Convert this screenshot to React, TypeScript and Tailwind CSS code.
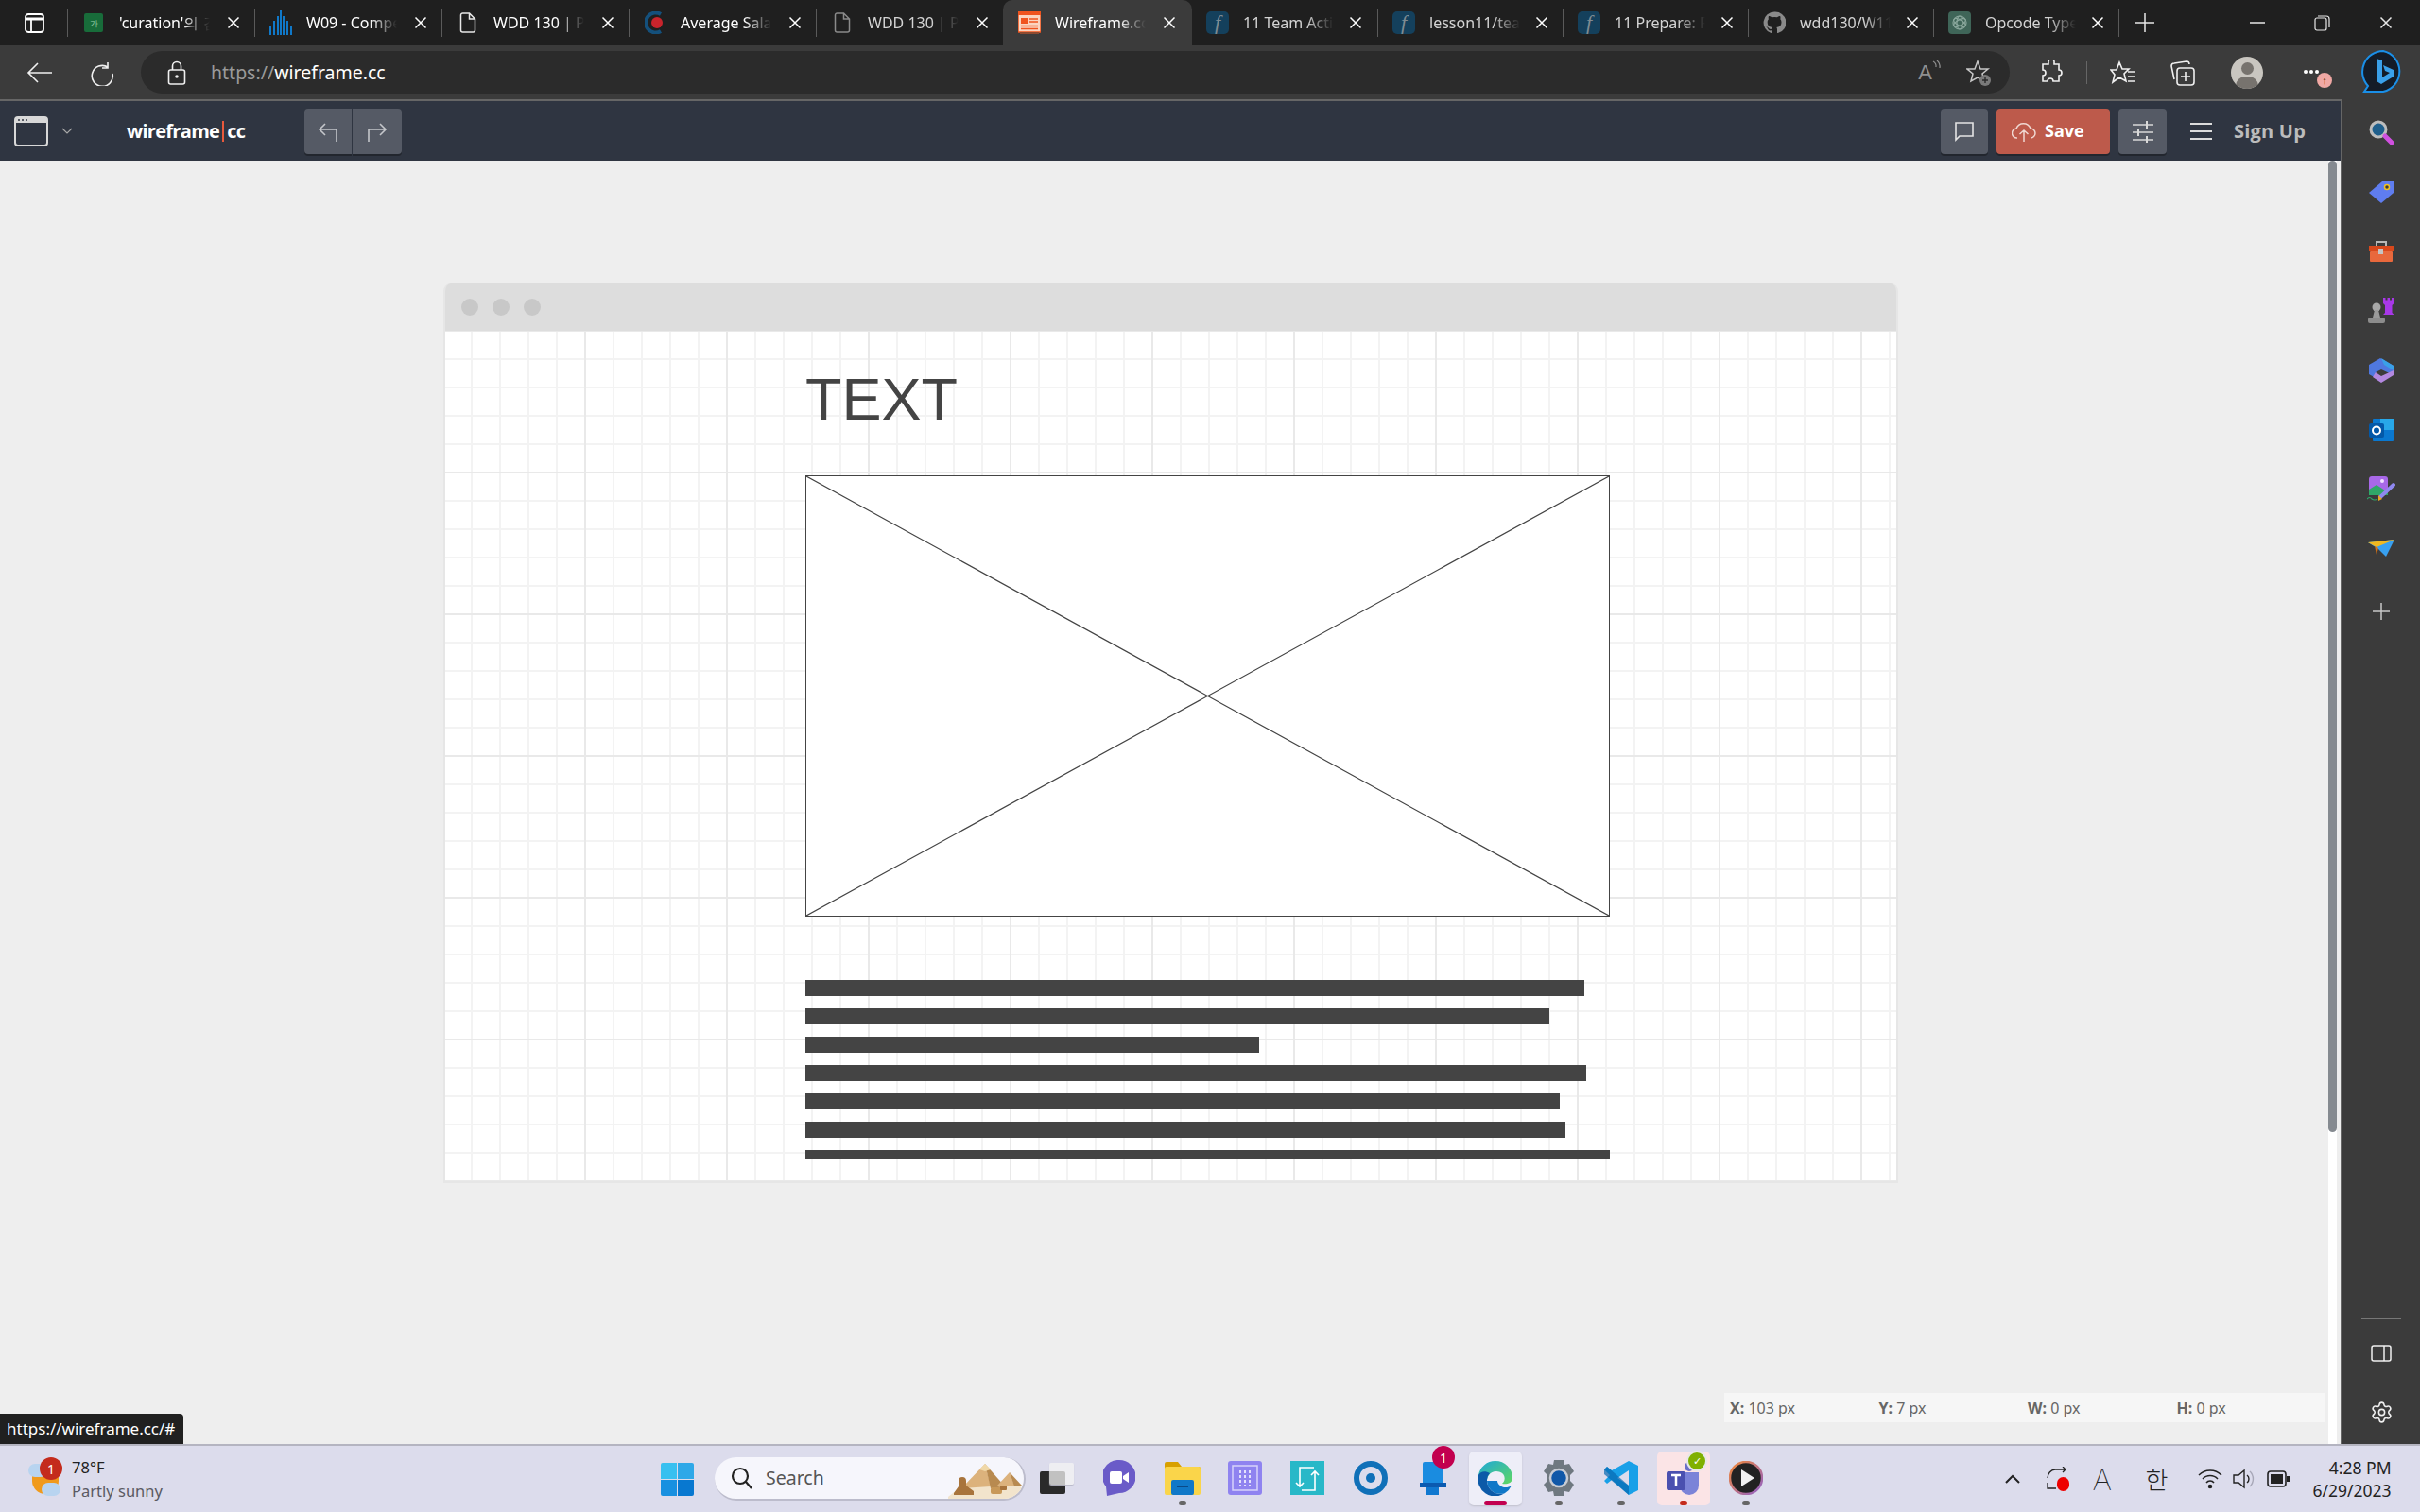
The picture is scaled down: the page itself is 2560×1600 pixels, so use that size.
import type { ReactNode } from "react";
import { Settings } from "lucide-react";

function CloseIcon({ className = "" }: { className?: string }) {
  return (
    <svg width="14" height="14" viewBox="0 0 14 14" className={className}>
      <path d="M1.5 1.5 L12.5 12.5 M12.5 1.5 L1.5 12.5" stroke="currentColor" strokeWidth="1.5" />
    </svg>
  );
}

const DocIcon = ({ dim }: { dim?: boolean }) => (
  <svg width="20" height="24" viewBox="0 0 20 24" fill="none" stroke={dim ? "#8a8a8a" : "#e8e8e8"} strokeWidth="1.5">
    <path d="M2.5 4 a2 2 0 0 1 2-2 h7 l6 6 v12 a2 2 0 0 1-2 2 h-11 a2 2 0 0 1-2-2 z M11.5 2 v6 h6" />
  </svg>
);

const FIcon = () => (
  <div className="flex h-6 w-6 items-center justify-center rounded-[5px] bg-[#14405c] font-['Liberation_Serif',serif] text-[22px] italic leading-none text-[#7f8b92]">
    f
  </div>
);

const SheetIcon = () => (
  <div className="flex h-[20px] w-[20px] items-center justify-center rounded-[2px] bg-[#186c3a] text-[9px] leading-none text-[#9fd0ad]">
    가
  </div>
);

const BarsIcon = () => (
  <svg width="24" height="26" viewBox="0 0 24 26" fill="#1078c8">
    <rect x="0" y="16" width="2" height="10" />
    <rect x="4" y="11" width="2" height="15" />
    <rect x="8" y="6" width="2" height="20" />
    <rect x="11" y="0" width="2" height="26" />
    <rect x="14" y="6" width="2" height="20" />
    <rect x="18" y="11" width="2" height="15" />
    <rect x="22" y="16" width="2" height="10" />
  </svg>
);

const TargetFavicon = () => (
  <svg width="22" height="24" viewBox="0 0 22 24">
    <path d="M17 3 A10.5 10.5 0 1 0 17 21" fill="none" stroke="#14507c" strokeWidth="4" />
    <circle cx="13" cy="12" r="6" fill="#c8242c" />
  </svg>
);

const WireframeFavicon = () => (
  <svg width="24" height="24" viewBox="0 0 24 24">
    <rect x="0" y="0" width="24" height="22" fill="#fbd5c0" stroke="#f0541e" strokeWidth="1.5" />
    <rect x="0" y="0" width="24" height="4" fill="#f0541e" />
    <rect x="3" y="7" width="7" height="6" fill="#f0541e" />
    <path d="M12 8 h9 M12 11 h9 M3 15.5 h18 M3 18.5 h18" stroke="#f0541e" strokeWidth="1.5" />
    <rect x="2" y="22" width="20" height="2" fill="#8c4a30" />
  </svg>
);

const GithubFavicon = () => (
  <svg width="24" height="24" viewBox="0 0 24 24" fill="#8a8a8a">
    <path d="M12 .5a11.5 11.5 0 0 0-3.6 22.4c.6.1.8-.3.8-.6v-2c-3.2.7-3.9-1.5-3.9-1.5-.5-1.3-1.3-1.7-1.3-1.7-1-.7.1-.7.1-.7 1.2.1 1.8 1.2 1.8 1.2 1 1.8 2.7 1.3 3.4 1 .1-.8.4-1.3.7-1.6-2.6-.3-5.3-1.3-5.3-5.7 0-1.3.5-2.3 1.2-3.1-.1-.3-.5-1.5.1-3.1 0 0 1-.3 3.2 1.2a11 11 0 0 1 5.8 0c2.2-1.5 3.2-1.2 3.2-1.2.6 1.6.2 2.8.1 3.1.8.8 1.2 1.8 1.2 3.1 0 4.4-2.7 5.4-5.3 5.7.4.4.8 1.1.8 2.2v3.3c0 .3.2.7.8.6A11.5 11.5 0 0 0 12 .5z" />
  </svg>
);

const GptFavicon = () => (
  <div className="flex h-6 w-6 items-center justify-center rounded-[4px] bg-[#3f6558]">
    <svg width="18" height="18" viewBox="0 0 18 18" fill="none" stroke="#8aa79c" strokeWidth="1.2">
      <circle cx="9" cy="9" r="7" />
      <ellipse cx="9" cy="9" rx="3" ry="7" />
      <ellipse cx="9" cy="9" rx="3" ry="7" transform="rotate(60 9 9)" />
      <ellipse cx="9" cy="9" rx="3" ry="7" transform="rotate(120 9 9)" />
    </svg>
  </div>
);

type TabInfo = { title: string; icon: ReactNode; active?: boolean; narrow?: boolean; noLine?: boolean; dim?: boolean };

const tabs: TabInfo[] = [
  { title: "'curation'의 검색결과", icon: <SheetIcon /> },
  { title: "W09 - Compensation", icon: <BarsIcon /> },
  { title: "WDD 130 | Projects", icon: <DocIcon /> },
  { title: "Average Salary", icon: <TargetFavicon /> },
  { title: "WDD 130 | Projects", icon: <DocIcon dim />, dim: true },
  { title: "Wireframe.cc", icon: <WireframeFavicon />, active: true },
  { title: "11 Team Activity", icon: <FIcon />, narrow: true, noLine: true, dim: true },
  { title: "lesson11/team", icon: <FIcon />, narrow: true, dim: true },
  { title: "11 Prepare: Rec", icon: <FIcon />, narrow: true, dim: true },
  { title: "wdd130/W11", icon: <GithubFavicon />, narrow: true, dim: true },
  { title: "Opcode Types", icon: <GptFavicon />, narrow: true, dim: true },
];

function Tab({ tab }: { tab: TabInfo }) {
  return (
    <div
      className={`relative flex h-[48px] shrink-0 items-center ${
        tab.active ? "w-[200px] rounded-t-[10px] bg-[#3b3b3b]" : tab.narrow ? "w-[196px]" : "w-[198px]"
      }`}
    >
      {!tab.active && !tab.noLine && <div className="h-[30px] w-[1px] shrink-0 bg-[#5a5a5a]" />}
      <div className={`flex w-[24px] shrink-0 items-center justify-center ${tab.active ? "ml-[16px]" : "ml-[15px]"}`}>
        {tab.icon}
      </div>
      <div
        className={`ml-[15px] w-[96px] shrink-0 overflow-hidden whitespace-nowrap text-[16px] [mask-image:linear-gradient(to_right,black_70%,transparent)] ${
          tab.dim ? "text-[#d4d4d4]" : "text-white"
        }`}
      >
        {tab.title}
      </div>
      <CloseIcon className={`shrink-0 text-white ${tab.narrow ? "ml-[16px]" : "ml-[18px]"}`} />
    </div>
  );
}

function TabStrip() {
  return (
    <div className="flex h-[48px] shrink-0 items-center bg-[#1f1f1f]">
      <div className="flex w-[71px] shrink-0 justify-start pl-[26px]">
        <svg width="21" height="21" viewBox="0 0 21 21" fill="none" stroke="white" strokeWidth="1.8">
          <rect x="1" y="1" width="19" height="19" rx="3" />
          <path d="M1 6 h19" strokeWidth="3" />
          <path d="M7 6 v14" />
        </svg>
      </div>
      {tabs.map((t, i) => (
        <Tab key={i} tab={t} />
      ))}
      <div className="h-[30px] w-[1px] shrink-0 bg-[#5a5a5a]" />
      <svg width="22" height="22" viewBox="0 0 22 22" className="ml-[16px]" stroke="#e8e8e8" strokeWidth="1.5">
        <path d="M11 1 v20 M1 11 h20" />
      </svg>
      <svg width="16" height="2" viewBox="0 0 16 2" className="ml-[100px]" stroke="#e8e8e8" strokeWidth="1.5">
        <path d="M0 1 h16" />
      </svg>
      <svg width="17" height="17" viewBox="0 0 17 17" className="ml-[52px]" fill="none" stroke="#e8e8e8" strokeWidth="1.2">
        <rect x="1" y="3" width="12" height="13" rx="2" />
        <path d="M4 1 h9 a3 3 0 0 1 3 3 v9" />
      </svg>
      <CloseIcon className="ml-[52px] text-[#e8e8e8]" />
    </div>
  );
}

function BrowserToolbar() {
  return (
    <div className="flex h-[57px] shrink-0 items-center bg-[#3b3b3b]">
      <svg width="28" height="24" viewBox="0 0 28 24" className="ml-[28px]" fill="none" stroke="#f0f0f0" strokeWidth="1.6">
        <path d="M27 12 H2 M12 2 L2 12 L12 22" />
      </svg>
      <svg width="28" height="28" viewBox="0 0 28 28" className="ml-[38px]" fill="none" stroke="#f0f0f0" strokeWidth="1.6">
        <path d="M20 3 v6 h-6 M20 8 A11 11 0 1 0 25 15" />
      </svg>
      <div className="ml-[27px] flex h-[45px] w-[1977px] items-center rounded-full bg-[#2b2b2b]">
        <svg width="20" height="26" viewBox="0 0 20 26" className="ml-[28px]" fill="none" stroke="#f0f0f0" strokeWidth="1.6">
          <rect x="1.5" y="10" width="17" height="15" rx="2" />
          <path d="M5.5 10 V6 a4.5 4.5 0 0 1 9 0 V10" />
          <circle cx="10" cy="17" r="1" fill="#f0f0f0" />
        </svg>
        <div className="ml-[26px] text-[19.5px] text-white">
          <span className="text-[#9a9a9a]">https://</span>wireframe.cc
        </div>
        <div className="flex-1" />
        <div className="font-['Liberation_Sans',sans-serif] text-[22px] font-light leading-none text-[#8f8f8f]">A</div>
        <svg width="10" height="16" viewBox="0 0 10 16" className="mb-[12px]" fill="none" stroke="#8f8f8f" strokeWidth="1.2">
          <path d="M1 2 a6 6 0 0 1 3 6 M5 1 a9 9 0 0 1 3 8" />
        </svg>
        <svg width="28" height="30" viewBox="0 0 28 30" className="ml-[26px] mr-[18px]" fill="none" stroke="#c8c8c8" strokeWidth="1.5">
          <path d="M12 3 L15 11 H23 L17 16 L19 24 L12 20 L5 24 L7 16 L1 11 H9 Z" />
          <circle cx="20" cy="23" r="6" fill="#7a7a7a" stroke="none" />
          <path d="M17 23 h6 M20 20 v6" stroke="#2b2b2b" strokeWidth="1.4" />
        </svg>
      </div>
      <svg width="24" height="28" viewBox="0 0 24 28" className="ml-[32px]" fill="none" stroke="#f0f0f0" strokeWidth="1.6">
        <path d="M9 2 a3 3 0 0 1 6 1 l0 2 h5 v6 a3 3 0 1 1 0 6 v6 h-6 a3 3 0 1 0-6 0 H3 v-6 a3 3 0 1 0 0-6 V5 h6 z" />
      </svg>
      <div className="ml-[25px] h-[24px] w-[1px] bg-[#666666]" />
      <svg width="28" height="26" viewBox="0 0 28 26" className="ml-[24px]" fill="none" stroke="#f0f0f0" strokeWidth="1.6">
        <path d="M10 2 L13 9 H20 L15 14 L17 22 L10 18 L3 23 L5 15 L1 10 H7 Z M19 12 h7 M19 17 h7 M19 22 h7" />
      </svg>
      <svg width="28" height="30" viewBox="0 0 28 30" className="ml-[35px]" fill="none" stroke="#f0f0f0" strokeWidth="1.6">
        <rect x="8" y="10" width="18" height="18" rx="3" />
        <path d="M17 14 v10 M12 19 h10 M5 22 L2 8 a3 3 0 0 1 3-3 L18 3 a3 3 0 0 1 3 3" />
      </svg>
      <div className="relative ml-[37px] h-[34px] w-[34px] overflow-hidden rounded-full bg-[#c9c6c0]">
        <div className="absolute left-[11px] top-[6px] h-[13px] w-[13px] rounded-full bg-[#77736e]" />
        <div className="absolute left-[5px] top-[21px] h-[20px] w-[24px] rounded-full bg-[#77736e]" />
      </div>
      <div className="relative ml-[43px] h-[34px] w-[34px]">
        <div className="absolute left-0 top-[14px] flex gap-[2px]">
          <div className="h-[4px] w-[4px] rounded-full bg-white" />
          <div className="h-[4px] w-[4px] rounded-full bg-white" />
          <div className="h-[4px] w-[4px] rounded-full bg-white" />
        </div>
        <div className="absolute left-[14px] top-[17px] flex h-[16px] w-[16px] items-center justify-center rounded-full bg-[#f0a8a4] text-[11px] font-bold leading-none text-[#222222]">
          ↑
        </div>
      </div>
      <svg width="46" height="48" viewBox="0 0 46 48" className="ml-[27px]">
        <path d="M23 1 a22 22 0 0 1 0 43 H3 l4-6 A22 22 0 0 1 23 1 z" fill="#141c28" stroke="#1a8fe8" strokeWidth="2" />
        <path d="M16 9 l6 2 v18 l8-5 -5-2 -2-6 11 5 v7 l-13 8 -5-3 z" fill="#3aa0ea" />
      </svg>
    </div>
  );
}

function NavButton({ children, className = "" }: { children: ReactNode; className?: string }) {
  return (
    <div className={`flex h-[48px] w-[50px] items-center justify-center rounded-[4px] bg-[#555a65] shadow-[0_2px_0_#22262e] ${className}`}>
      {children}
    </div>
  );
}

function WireframeNav() {
  return (
    <div className="flex h-[65px] shrink-0 items-center border-t-2 border-[#666666] bg-[#2f3541] pr-[37px]">
      <svg width="36" height="32" viewBox="0 0 36 32" className="ml-[15px]" fill="none">
        <rect x="1" y="1" width="34" height="30" rx="3" stroke="#d8d8d8" strokeWidth="2" />
        <path d="M1 4 a3 3 0 0 1 3-3 h28 a3 3 0 0 1 3 3 v3 H1 z" fill="#d8d8d8" />
        <circle cx="5" cy="4" r="1" fill="#2f3541" />
        <circle cx="9" cy="4" r="1" fill="#2f3541" />
        <circle cx="13" cy="4" r="1" fill="#2f3541" />
      </svg>
      <svg width="12" height="7" viewBox="0 0 12 7" className="ml-[14px]" fill="none" stroke="#a8a8a8" strokeWidth="1.2">
        <path d="M1 1 L6 6 L11 1" />
      </svg>
      <div className="ml-[57px] flex w-[127px] items-center whitespace-nowrap font-['Open_Sans',sans-serif] text-[20px] font-bold tracking-[-0.7px] text-white">
        wireframe
        <div className="mx-[3px] h-[22px] w-[2px] bg-[#e8593c]" />
        cc
      </div>
      <div className="ml-[61px] flex gap-[1px]">
        <NavButton className="rounded-r-none">
          <svg width="24" height="24" viewBox="0 0 24 24" fill="none" stroke="#c4c6ca" strokeWidth="1.6">
            <path d="M9 4 L3 10 L9 16 M3 10 H21 V23" />
          </svg>
        </NavButton>
        <NavButton className="w-[52px] rounded-l-none">
          <svg width="24" height="24" viewBox="0 0 24 24" fill="none" stroke="#c4c6ca" strokeWidth="1.6">
            <path d="M15 4 L21 10 L15 16 M21 10 H3 V23" />
          </svg>
        </NavButton>
      </div>
      <div className="flex-1" />
      <NavButton>
        <svg width="22" height="22" viewBox="0 0 22 22" fill="none" stroke="#e4e4e4" strokeWidth="1.6">
          <path d="M2 2 H20 V16 H6 L2 20 Z" />
        </svg>
      </NavButton>
      <div className="ml-[9px] flex h-[48px] w-[120px] items-center rounded-[4px] bg-[#bd5a4b] shadow-[0_2px_0_#22262e]">
        <svg width="26" height="24" viewBox="0 0 26 24" className="ml-[16px]" fill="none" stroke="#f0d8d2" strokeWidth="1.5">
          <path d="M6 19 a5 5 0 0 1-1-10 a8 8 0 0 1 15 0 a5 5 0 0 1 0 10 M13 23 V11 M8.5 15 L13 11 L17.5 15" />
        </svg>
        <span className="ml-[9px] font-['Open_Sans',sans-serif] text-[18px] font-bold text-white">Save</span>
      </div>
      <NavButton className="ml-[9px] w-[51px]">
        <svg width="22" height="24" viewBox="0 0 22 24" fill="none" stroke="#d8d8d8" strokeWidth="1.6">
          <path d="M0 5 H22 M0 13 H22 M0 21 H22" />
          <path d="M15 1 V9 M6 9 V17 M15 17 V24" strokeWidth="2" />
        </svg>
      </NavButton>
      <svg width="23" height="20" viewBox="0 0 23 20" className="ml-[25px]" stroke="#dcdcdc" strokeWidth="2">
        <path d="M0 2 H23 M0 10 H23 M0 18 H23" />
      </svg>
      <div className="ml-[23px] font-['Open_Sans',sans-serif] text-[20px] font-bold tracking-[0.2px] text-[#bcbcbc]">Sign Up</div>
    </div>
  );
}

// widths of the text placeholder rows, in px
const textRows = [824, 787, 480, 826, 798, 804, 851];

function WireframeWindow() {
  return (
    <div className="ml-[469px] mt-[130px] h-[952px] w-[1539px] shrink-0 overflow-hidden rounded-t-[8px] border-b-2 border-l-2 border-r-2 border-[#e6e6e6]">
      <div className="-mx-[2px] flex h-[50px] items-center gap-[15px] bg-[#dddddd] pl-[19px]">
        <div className="h-[18px] w-[18px] rounded-full bg-[#c8c8c8]" />
        <div className="h-[18px] w-[18px] rounded-full bg-[#c8c8c8]" />
        <div className="h-[18px] w-[18px] rounded-full bg-[#c8c8c8]" />
      </div>
      <div className="relative h-[900px] bg-white bg-[linear-gradient(to_right,#e9e9e9_2px,transparent_2px),linear-gradient(to_bottom,#e9e9e9_2px,transparent_2px),linear-gradient(to_right,#f3f3f3_2px,transparent_2px),linear-gradient(to_bottom,#f3f3f3_2px,transparent_2px)] bg-[size:150px_150px,150px_150px,30px_30px,30px_30px] bg-[position:-3px_0,0_-1px,-3px_0,0_-1px]">
        <div className="absolute left-[381px] top-[27px] font-['Liberation_Sans',sans-serif] text-[63px] leading-[90px] text-[#444444]">TEXT</div>
        <div className="absolute left-[381px] top-[153px] h-[467px] w-[851px] border border-[#444444] bg-white">
          <svg width="849" height="465" viewBox="0 0 849 465" className="block">
            <path d="M0 0 L849 465 M849 0 L0 465" stroke="#444444" strokeWidth="1.2" fill="none" />
          </svg>
        </div>
        <div className="absolute left-[381px] top-[687px] flex flex-col gap-[13px]">
          {textRows.map((w, i) => (
            <div key={i} className={`bg-[#444444] ${i === 6 ? "h-[9px]" : "h-[17px]"}`} style={{ width: w }} />
          ))}
        </div>
      </div>
    </div>
  );
}

function StatusReadout() {
  const items = [
    ["X:", "103 px"],
    ["Y:", "7 px"],
    ["W:", "0 px"],
    ["H:", "0 px"],
  ];
  return (
    <div className="absolute bottom-[23px] left-[1824px] flex h-[31px] w-[636px] items-center bg-[#f6f6f6] pl-[6px] text-[16px] text-[#666666]">
      {items.map(([k, v]) => (
        <div key={k} className="w-[159px] whitespace-nowrap">
          <span className="font-bold">{k}</span> {v}
        </div>
      ))}
    </div>
  );
}

function SideIcons() {
  return (
    <>
      <div className="flex h-[63px] items-center justify-center">
        <svg width="26" height="26" viewBox="0 0 26 26">
          <circle cx="10" cy="10" r="8" fill="#1f5f8c" stroke="#bdbdbd" strokeWidth="3" />
          <path d="M17 17 L24 24" stroke="#d050e0" strokeWidth="5" strokeLinecap="round" />
        </svg>
      </div>
      <div className="flex h-[63px] items-center justify-center">
        <svg width="26" height="24" viewBox="0 0 26 24">
          <path d="M0 13 L14 1 H26 V13 L13 24 Z" fill="#5f7df0" />
          <circle cx="19" cy="7" r="2.5" fill="#3b3b3b" stroke="#f0c020" strokeWidth="1.5" />
        </svg>
      </div>
      <div className="flex h-[63px] items-center justify-center">
        <svg width="28" height="24" viewBox="0 0 28 24">
          <path d="M9 6 V2 h10 V6" fill="none" stroke="#b8b8b8" strokeWidth="2" />
          <rect x="1" y="6" width="26" height="6" fill="#d8481c" />
          <rect x="2" y="12" width="24" height="11" rx="1" fill="#e8683c" />
          <rect x="11" y="10" width="5" height="5" fill="#c4c4c4" />
        </svg>
      </div>
      <div className="flex h-[63px] items-center justify-center">
        <svg width="28" height="28" viewBox="0 0 28 28">
          <circle cx="9" cy="10" r="4.5" fill="#a8a8a8" />
          <path d="M7 13 h4 l2 8 h-8 z" fill="#9a9a9a" />
          <rect x="0" y="21" width="18" height="6" rx="2" fill="#8c8c8c" />
          <path d="M16 0 h2.5 v2.5 h2 v-2.5 h2.5 v2.5 h2 v-2.5 h2.5 v6 l-2 2 v8 l2 2 h-11.5 l2-2 V8 l-2-2 z" fill="#a838e8" />
        </svg>
      </div>
      <div className="flex h-[63px] items-center justify-center">
        <svg width="26" height="26" viewBox="0 0 26 26">
          <path d="M0 7 L12 0 L26 8 V18 L13 12 L7 15 V21 L0 17 Z" fill="#4f78e0" />
          <path d="M13 0 L26 8 V13 L16 7 Z" fill="#3aa0e8" />
          <path d="M7 15 L13 19 L26 13 V18 L13 26 L4 20 Z" fill="#b388e0" />
        </svg>
      </div>
      <div className="flex h-[63px] items-center justify-center">
        <svg width="26" height="24" viewBox="0 0 26 24">
          <rect x="4" y="0" width="22" height="24" rx="1" fill="#0a78d0" />
          <rect x="12" y="0" width="14" height="12" fill="#28a8e8" />
          <rect x="0" y="5" width="16" height="15" rx="2" fill="#0358a8" />
          <circle cx="8" cy="12.5" r="4" fill="none" stroke="white" strokeWidth="2" />
        </svg>
      </div>
      <div className="flex h-[63px] items-center justify-center">
        <svg width="30" height="28" viewBox="0 0 30 28">
          <rect x="2" y="0" width="20" height="20" rx="3" fill="#a868e8" />
          <path d="M2 14 L10 9 L22 17 V20 H2 Z" fill="#2fa868" />
          <circle cx="16" cy="5" r="2" fill="#f0e0ff" />
          <path d="M14 22 L28 9" stroke="#8f88f0" strokeWidth="4" strokeLinecap="round" />
          <path d="M12 20 L16 24 L12 26 Z" fill="#e8a820" />
          <path d="M0 24 q3-3 5 0 q3 2 6 0" fill="none" stroke="#2fa868" strokeWidth="1.2" />
        </svg>
      </div>
      <div className="flex h-[63px] items-center justify-center">
        <svg width="28" height="20" viewBox="0 0 28 20">
          <path d="M0 3 L28 0 L19 18 L11 10 Z" fill="#38a0f0" />
          <path d="M0 3 L28 0 L9 8 Z" fill="#f0b820" />
          <path d="M7 7 L9 16 L11 9 Z" fill="#d07018" />
        </svg>
      </div>
      <div className="mt-[3px] flex h-[63px] items-center justify-center">
        <svg width="18" height="18" viewBox="0 0 18 18" stroke="#c8c8c8" strokeWidth="1.5">
          <path d="M9 0 V18 M0 9 H18" />
        </svg>
      </div>
    </>
  );
}

function EdgeSidebar() {
  return (
    <div className="flex w-[84px] shrink-0 flex-col border-l-2 border-[#666666] bg-[#3b3b3b] pt-[3px]">
      <SideIcons />
      <div className="flex-1" />
      <div className="mx-auto h-[1px] w-[42px] bg-[#777777]" />
      <div className="flex h-[72px] items-center justify-center">
        <svg width="22" height="18" viewBox="0 0 22 18" fill="none" stroke="#f0f0f0" strokeWidth="1.5">
          <rect x="1" y="1" width="20" height="16" rx="2" />
          <path d="M14 1 V17" />
        </svg>
      </div>
      <div className="flex h-[60px] items-start justify-center pt-[14px]">
        <Settings size={25} strokeWidth={1.5} className="text-[#f0f0f0]" />
      </div>
    </div>
  );
}

function TaskIcon({ children, dot, box }: { children: ReactNode; dot?: string; box?: string }) {
  return (
    <div className="relative flex h-[70px] w-[66.3px] shrink-0 items-center justify-center">
      {box && <div className={`absolute left-[5px] top-[6px] h-[57px] w-[56px] rounded-[5px] ${box}`} />}
      <div className="relative -mt-[2px]">{children}</div>
      {dot && <div className={`absolute bottom-[7px] left-1/2 h-[5px] -translate-x-1/2 rounded-full ${dot}`} />}
    </div>
  );
}

function TaskbarIcons() {
  return (
    <>
      <TaskIcon>
        <div className="relative h-[33px] w-[36px]">
          <div className="absolute bottom-0 left-0 h-[24px] w-[27px] rounded-[2px] bg-[#2a2a2a]" />
          <div className="absolute right-0 top-0 h-[23px] w-[26px] rounded-[2px] bg-[#f4f4f4]/75 shadow-[0_1px_1px_#b8b8c8]" />
        </div>
      </TaskIcon>
      <TaskIcon>
        <svg width="34" height="38" viewBox="0 0 34 38">
          <path d="M17 0 a17 17 0 0 1 0 35 L4 38 L3 28 A17 17 0 0 1 17 0 z" fill="#6a5bc8" />
          <rect x="7" y="12" width="13" height="13" rx="2" fill="white" />
          <path d="M21 17 L27 13 V24 L21 20 Z" fill="white" />
        </svg>
      </TaskIcon>
      <TaskIcon dot="w-[8px] bg-[#666666]">
        <svg width="38" height="36" viewBox="0 0 38 36">
          <path d="M0 3 a2 2 0 0 1 2-2 h12 l4 5 h18 a2 2 0 0 1 2 2 V10 H0 z" fill="#d8a000" />
          <rect x="0" y="6" width="38" height="30" rx="2" fill="#fad54a" />
          <rect x="7" y="20" width="24" height="16" rx="2" fill="#1078c8" />
          <path d="M13 27 h12" stroke="#0a4a88" strokeWidth="2" />
        </svg>
      </TaskIcon>
      <TaskIcon>
        <svg width="36" height="36" viewBox="0 0 36 36" fill="none">
          <rect width="36" height="36" rx="3" fill="#8f83f0" />
          <rect x="5" y="5" width="26" height="26" stroke="#d8d4fa" strokeWidth="1.5" />
          <path d="M13 10 V26 M18 10 V26 M23 10 V26" stroke="white" strokeWidth="1.5" strokeDasharray="3 2" />
        </svg>
      </TaskIcon>
      <TaskIcon>
        <svg width="36" height="36" viewBox="0 0 36 36" fill="none">
          <rect width="36" height="36" fill="#28b8c8" />
          <path d="M25 7 H10 V27 M6 23 L10 27 L14 23 M12 31 H26 V11 M22 15 L26 11 L30 15" stroke="white" strokeWidth="1.6" />
        </svg>
      </TaskIcon>
      <TaskIcon>
        <svg width="36" height="36" viewBox="0 0 36 36">
          <circle cx="18" cy="18" r="15" fill="none" stroke="#1070b8" strokeWidth="6" />
          <circle cx="18" cy="18" r="5" fill="#1070b8" />
        </svg>
      </TaskIcon>
      <TaskIcon>
        <div className="relative h-[36px] w-[36px]">
          <svg width="36" height="36" viewBox="0 0 36 36">
            <path d="M9 1 h18 a2 2 0 0 1 2 2 V26 H7 V3 a2 2 0 0 1 2-2 z" fill="#1a8ce0" />
            <rect x="4" y="23" width="28" height="5" fill="#0a5ab0" />
            <rect x="10" y="28" width="14" height="8" fill="#1078d0" />
          </svg>
          <div className="absolute -right-[5px] -top-[16px] flex h-[24px] w-[24px] items-center justify-center rounded-full bg-[#c2004f] text-[14px] text-white">
            1
          </div>
        </div>
      </TaskIcon>
      <TaskIcon box="bg-[#eeeef8] shadow-[0_1px_2px_#c0c0cc]" dot="w-[24px] bg-[#c2004f]">
        <svg width="36" height="38" viewBox="0 0 36 38">
          <defs>
            <linearGradient id="edgeG" x1="0" y1="0" x2="1" y2="1">
              <stop offset="0" stopColor="#1fa8d8" />
              <stop offset="1" stopColor="#5fd860" />
            </linearGradient>
          </defs>
          <path d="M18 1 a18 18 0 0 1 18 18 c0 6-7 7-11 6 c5-4 3-13-6-13 c-7 0-10 6-10 10 c-3-1-8-2-9-6 A18 18 0 0 1 18 1 z" fill="url(#edgeG)" />
          <path d="M0 16 a18 18 0 0 0 28 19 c-9 3-18-2-19-13 a10 10 0 0 1 3-8 C7 11 2 12 0 16 z" fill="#0c5aa8" />
          <path d="M9 22 c1 11 10 16 19 13 a18 18 0 0 0 7-8 c-7 5-15 0-15-5 Z" fill="#1078c8" />
        </svg>
      </TaskIcon>
      <TaskIcon dot="w-[8px] bg-[#666666]">
        <svg width="38" height="40" viewBox="0 0 38 40">
          <path d="M14 1 h10 l1 5 5-1 5 8-4 4 v6 l4 4-5 8-5-1-1 5 H14 l-1-5-5 1-5-8 4-4 v-6 l-4-4 5-8 5 1 z" fill="#6f7880" />
          <circle cx="19" cy="20" r="9" fill="#1058a8" stroke="#c8ccd4" strokeWidth="2.5" />
        </svg>
      </TaskIcon>
      <TaskIcon dot="w-[8px] bg-[#666666]">
        <svg width="36" height="36" viewBox="0 0 36 36">
          <path d="M26 0 L36 5 V31 L26 36 L8 20 L3 24 L0 21 L6 15 L0 9 L3 6 L8 10 Z M26 10 L14 18 L26 26 Z" fill="#18a0e8" fillRule="evenodd" />
          <path d="M0 9 L3 6 L26 26 V36 L0 14 Z" fill="#0668b0" opacity="0.7" />
        </svg>
      </TaskIcon>
      <TaskIcon box="bg-[#fbe4e6]" dot="w-[8px] bg-[#c42b1c]">
        <div className="relative h-[36px] w-[36px]">
          <svg width="38" height="38" viewBox="0 0 38 38">
            <circle cx="24" cy="6" r="5" fill="#6a70c8" />
            <path d="M14 12 H34 V26 a10 10 0 0 1-20 0 Z" fill="#7b83d8" />
            <rect x="0" y="11" width="20" height="20" rx="2" fill="#4a50b0" />
            <path d="M5 15 H15 M10 15 V27" stroke="white" strokeWidth="2.5" />
          </svg>
          <div className="absolute -right-[5px] -top-[9px] flex h-[18px] w-[18px] items-center justify-center rounded-full bg-[#7fb000] text-[11px] text-white ring-2 ring-[#e8e8e8]">
            ✓
          </div>
        </div>
      </TaskIcon>
      <TaskIcon dot="w-[8px] bg-[#666666]">
        <svg width="36" height="36" viewBox="0 0 36 36">
          <defs>
            <linearGradient id="playG" x1="0" y1="0" x2="1" y2="1">
              <stop offset="0" stopColor="#f08838" />
              <stop offset="1" stopColor="#9060c8" />
            </linearGradient>
          </defs>
          <circle cx="18" cy="18" r="17" fill="#222222" stroke="url(#playG)" strokeWidth="2.5" />
          <path d="M13 9 L27 18 L13 27 Z" fill="#f0f0f0" />
        </svg>
      </TaskIcon>
    </>
  );
}

function Taskbar() {
  return (
    <div className="flex h-[72px] shrink-0 items-center border-t-2 border-[#b4b4c0] bg-[#dcdcec]">
      <div className="relative ml-[30px] h-[40px] w-[36px] shrink-0">
        <div className="absolute left-[4px] top-[10px] h-[26px] w-[28px] rounded-b-full bg-[#f09a1c]" />
        <div className="absolute left-0 top-[4px] h-[14px] w-[20px] rounded-full bg-[#b8d4f0]" />
        <div className="absolute left-[14px] top-[24px] h-[14px] w-[20px] rounded-full bg-[#b8d4f0]" />
        <div className="absolute left-[12px] -top-[3px] flex h-[24px] w-[24px] items-center justify-center rounded-full bg-[#c42b1c] text-[14px] text-white">
          1
        </div>
      </div>
      <div className="ml-[10px] w-[623px] shrink-0 text-[16.5px] leading-[25px]">
        <div className="text-[#222222]">78°F</div>
        <div className="text-[#5a5a62]">Partly sunny</div>
      </div>
      <div className="grid h-[35px] w-[35px] shrink-0 grid-cols-2 gap-[1px]">
        <div className="rounded-tl-[2px] bg-[#38c0f0]" />
        <div className="rounded-tr-[2px] bg-[#2ea8e8]" />
        <div className="rounded-bl-[2px] bg-[#1890e0]" />
        <div className="rounded-br-[2px] bg-[#0878d0]" />
      </div>
      <div className="relative ml-[22px] flex h-[46px] w-[329px] shrink-0 items-center overflow-hidden rounded-full border-b-2 border-r-2 border-[#bcbccc] bg-[#f6f6fc] pl-[17px]">
        <svg width="24" height="24" viewBox="0 0 24 24" fill="none" stroke="#222222" strokeWidth="2.2">
          <circle cx="10" cy="10" r="8" />
          <path d="M16 16 L22 23" />
        </svg>
        <span className="ml-[13px] text-[19.5px] text-[#555555]">Search</span>
        <svg width="80" height="40" viewBox="0 0 80 40" className="absolute bottom-0 right-0">
          <path d="M0 38 L14 27 H76 L80 30 V40 H0 Z" fill="#f2e4cc" />
          <path d="M14 29 L39 3 L45 27 Z" fill="#dcb27c" />
          <path d="M39 3 L60 27 L45 29 Z" fill="#b88a50" />
          <path d="M33 9 L39 3 L45 9 L39 11 Z" fill="#f0d8a8" />
          <path d="M52 26 L65 12 L70 26 Z" fill="#dcb27c" />
          <path d="M65 12 L78 26 L70 27 Z" fill="#b88a50" />
          <path d="M6 34 L11 27 V21 a4 4 0 0 1 8 0 V26 L27 32 V36 H6 Z" fill="#a8743c" />
          <rect x="45" y="28" width="12" height="7" rx="2" fill="#c89858" />
          <rect x="55" y="26" width="7" height="5" rx="1" fill="#a8743c" />
        </svg>
      </div>
      <div className="flex">
        <TaskbarIcons />
      </div>
      <svg width="16" height="10" viewBox="0 0 16 10" className="ml-[240px] shrink-0" fill="none" stroke="#222222" strokeWidth="2">
        <path d="M1 9 L8 2 L15 9" />
      </svg>
      <div className="relative ml-[26px] h-[26px] w-[26px] shrink-0">
        <svg width="26" height="26" viewBox="0 0 26 26" fill="none" stroke="#222222" strokeWidth="1.3">
          <path d="M22 3 H11 A9 9 0 0 0 3 12 M19 0 L22 3 L19 6 M3 23 H12 M3 17 V23 H9" />
        </svg>
        <div className="absolute bottom-0 right-0 h-[15px] w-[13px] rounded-full bg-[#ee0000]" />
      </div>
      <div className="ml-[26px] w-[22px] shrink-0 font-['Noto_Sans',sans-serif] text-[32px] font-thin leading-none text-[#222222]">A</div>
      <div className="ml-[33px] w-[26px] shrink-0 font-['Noto_Sans_CJK_KR',sans-serif] text-[26px] font-light leading-none text-[#222222]">한</div>
      <svg width="26" height="22" viewBox="0 0 26 22" className="ml-[29px] shrink-0" fill="none" stroke="#222222" strokeWidth="1.5">
        <path d="M1 7 a17 17 0 0 1 24 0 M5 11 a11 11 0 0 1 16 0 M9 15 a5 5 0 0 1 8 0" />
        <circle cx="13" cy="19" r="1.5" fill="#222222" />
      </svg>
      <svg width="24" height="24" viewBox="0 0 24 24" className="ml-[11px] shrink-0" fill="none" stroke="#222222" strokeWidth="1.4">
        <path d="M1 8 H6 L12 3 V21 L6 16 H1 Z M15 8 a5 5 0 0 1 0 8" />
        <path d="M18 4 a11 11 0 0 1 0 16" stroke="#a8a8b8" />
      </svg>
      <svg width="24" height="18" viewBox="0 0 24 18" className="ml-[12px] shrink-0" fill="none" stroke="#222222" strokeWidth="1.6">
        <rect x="1" y="1" width="19" height="16" rx="3" />
        <rect x="4" y="4" width="13" height="10" fill="#222222" stroke="none" />
        <rect x="21" y="6" width="3" height="6" fill="#222222" stroke="none" />
      </svg>
      <div className="ml-[7px] w-[101px] shrink-0 text-right text-[17.5px] leading-[24px] text-[#222222]">
        <div>4:28 PM</div>
        <div>6/29/2023</div>
      </div>
    </div>
  );
}

export default function App() {
  return (
    <div className="flex h-[1600px] w-[2560px] flex-col overflow-hidden bg-[#3b3b3b] font-['Noto_Sans',sans-serif]">
      <TabStrip />
      <BrowserToolbar />
      <div className="flex min-h-0 flex-1">
        <div className="flex min-w-0 flex-1 flex-col">
          <WireframeNav />
          <div className="relative flex min-h-0 flex-1 bg-[#eeeeee]">
            <WireframeWindow />
            <StatusReadout />
            <div className="absolute bottom-0 left-0 flex h-[32px] w-[194px] items-center rounded-tr-[4px] bg-[#202020] pl-[7px] text-[17px] text-white">
              https://wireframe.cc/#
            </div>
            <div className="absolute bottom-0 right-[4px] top-0 w-[9px] bg-white">
              <div className="h-[1028px] rounded-full bg-[#858a90]" />
            </div>
          </div>
        </div>
        <EdgeSidebar />
      </div>
      <Taskbar />
    </div>
  );
}
